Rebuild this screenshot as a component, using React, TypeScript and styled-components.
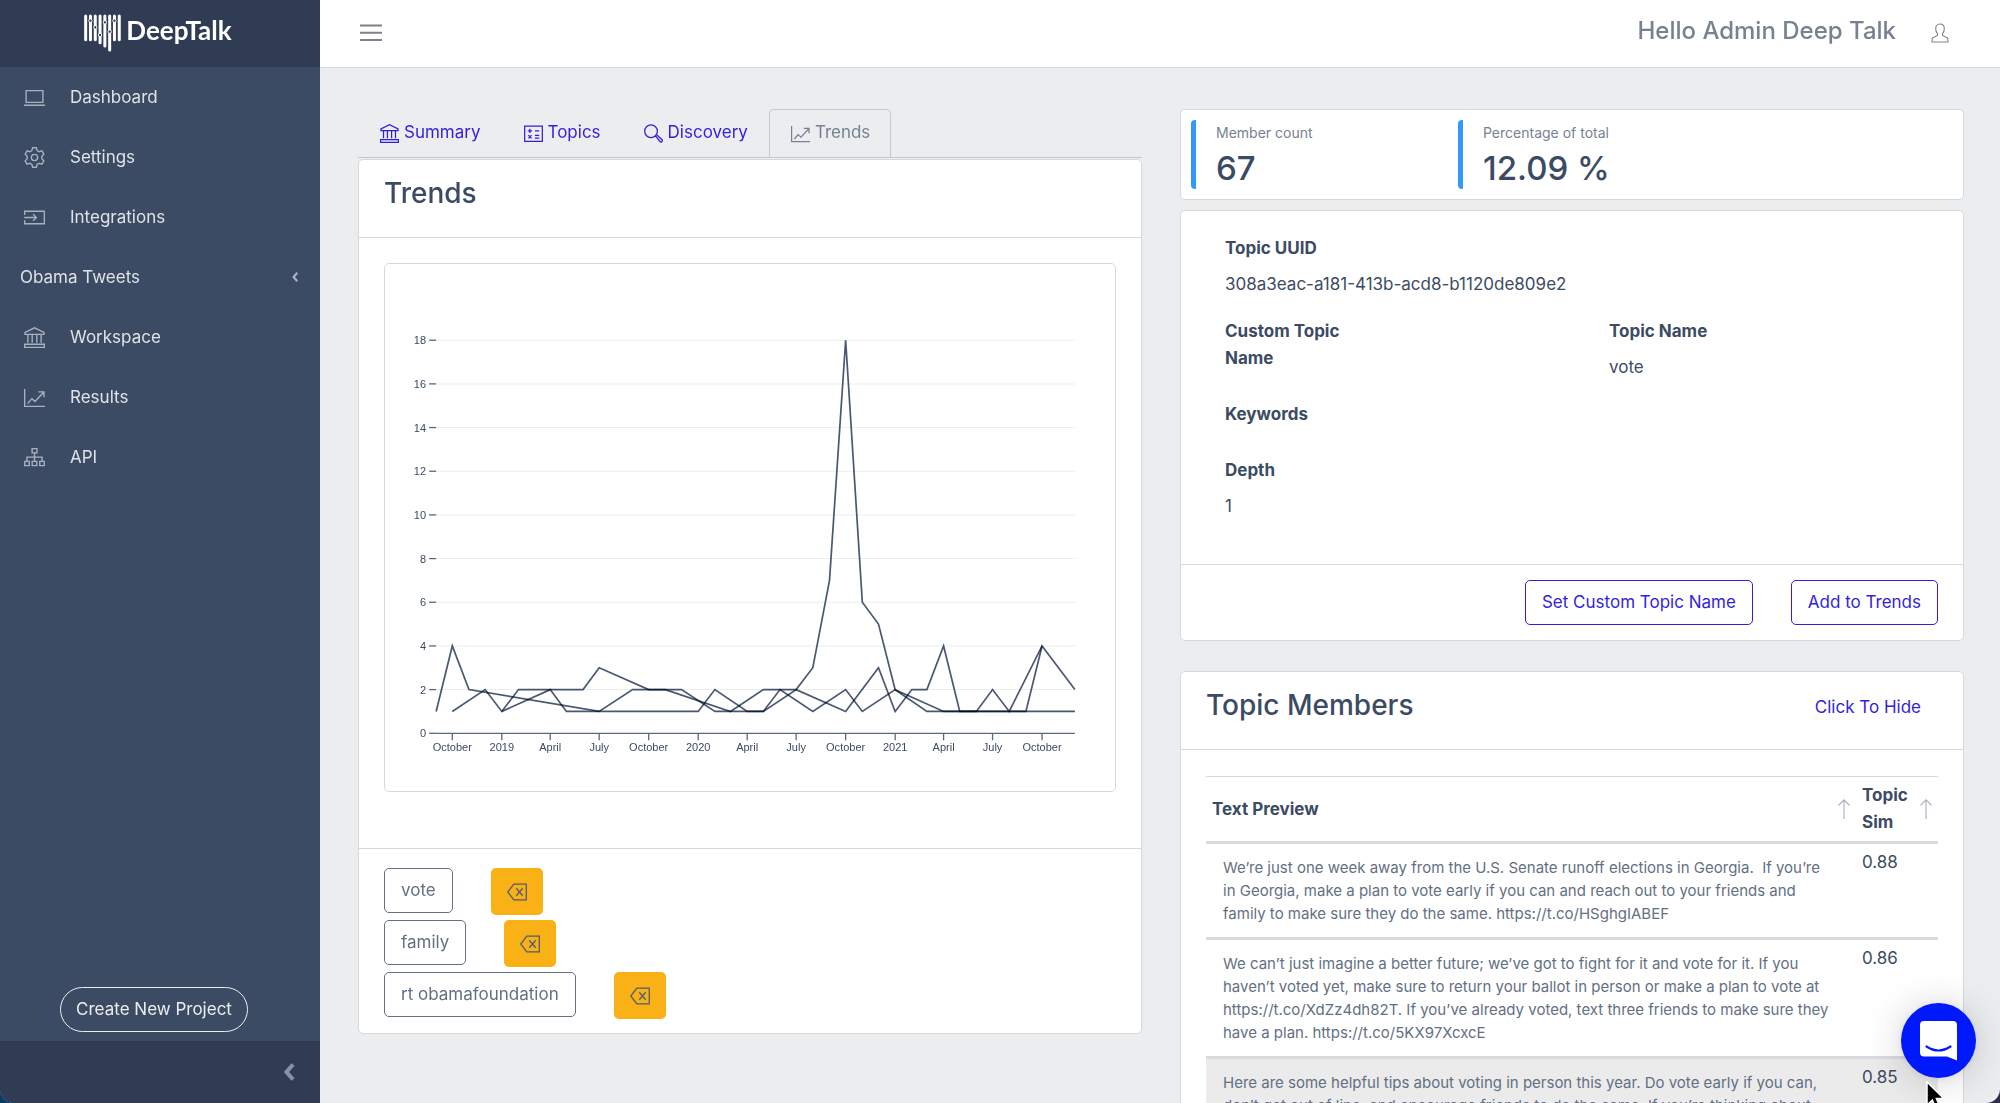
import React from "react";
import styled, { createGlobalStyle } from "styled-components";

const color = {
  text: "#3c4b64",
  muted: "#768192",
  secondary: "#636f83",
  border: "#d5d8dd",
  link: "#321fdb",
  page: "#ebedef",
  side: "#3c4b64",
  sideDark: "#303c54",
  warning: "#f9b115",
  info: "#3399ff",
};

const Global = createGlobalStyle`
  *, *::before, *::after { box-sizing: border-box; }
  body {
    margin: 0;
    background: linear-gradient(90deg, #0d3a63 0%, #2f2a4e 100%);
    color: ${color.text};
    font: 400 17px/27px Inter, "Liberation Sans", sans-serif;
  }
  a { color: ${color.link}; text-decoration: none; }
  button { font: inherit; cursor: pointer; }
  h1, h2, p, ul, dl, dd { margin: 0; padding: 0; }
  ul { list-style: none; }
`;

/* ---------- Shell ---------- */

const Shell = styled.div`
  display: flex;
  height: 100vh;
  overflow: hidden;
  border-radius: 0 0 14px 14px;
  background: ${color.page};
`;

const Sidebar = styled.aside`
  display: flex;
  flex: 0 0 320px;
  flex-direction: column;
  background: ${color.side};
  color: #dfe2e6;
`;

const Brand = styled.a`
  display: flex;
  flex: 0 0 67px;
  align-items: center;
  justify-content: center;
  gap: 5px;
  padding: 0 4px 2px 0;
  background: ${color.sideDark};
  color: #fff;
  font: 700 26px/28px Lato, sans-serif;
`;

const BrandName = styled.span`
  padding-bottom: 6px;
`;

const SideNav = styled.nav`
  flex: 1;
`;

const SideLink = styled.a`
  display: flex;
  align-items: center;
  gap: 25px;
  height: 60px;
  padding: 0 24px;
  color: #dfe2e6;
  svg { color: #a9b1be; }
`;

const SideGroup = styled.button`
  display: flex;
  align-items: center;
  justify-content: space-between;
  width: 100%;
  height: 60px;
  padding: 0 20px;
  border: 0;
  background: none;
  color: #dfe2e6;
  svg { color: #a9b1be; }
`;

const PillButton = styled.button`
  align-self: center;
  height: 45px;
  margin: 0 12px 9px 0;
  padding: 0 15px;
  border: 1px solid #ebedef;
  border-radius: 23px;
  background: none;
  color: #ebedef;
`;

const Minimizer = styled.button`
  display: flex;
  flex: 0 0 62px;
  align-items: center;
  justify-content: flex-end;
  padding: 0 24px;
  border: 0;
  background: ${color.sideDark};
  color: #8a93a2;
`;

const Main = styled.div`
  display: flex;
  flex: 1;
  flex-direction: column;
  min-width: 0;
`;

const TopBar = styled.header`
  display: flex;
  flex: 0 0 68px;
  align-items: center;
  justify-content: space-between;
  padding: 0 50px 2px 40px;
  border-bottom: 1px solid ${color.border};
  background: #fff;
`;

const IconButton = styled.button`
  display: flex;
  padding: 0;
  border: 0;
  background: none;
  color: #80808a;
`;

const Account = styled.div`
  display: flex;
  align-items: center;
  gap: 34px;
`;

const Greeting = styled.p`
  padding-bottom: 4px;
  color: ${color.muted};
  font-size: 24px;
  font-weight: 500;
  line-height: 32px;
`;

const Content = styled.main`
  display: grid;
  flex: 1;
  grid-template-columns: 1fr 1fr;
  gap: 38px;
  align-items: start;
  min-height: 0;
  padding: 41px 36px 0 38px;
`;

/* ---------- Cards ---------- */

const Card = styled.section`
  border: 1px solid ${color.border};
  border-radius: 5px;
  background: #fff;
`;

const CardHeader = styled.header`
  display: flex;
  align-items: center;
  justify-content: space-between;
  padding: 15px 42px 26px 25px;
  border-bottom: 1px solid ${color.border};
`;

const CardTitle = styled.h2`
  font-size: 28px;
  font-weight: 500;
  line-height: 36px;
`;

const HeaderLink = styled.a`
  padding-top: 4px;
`;

/* ---------- Left column ---------- */

const Tabs = styled.nav`
  display: flex;
  margin-bottom: 1px;
  border-bottom: 1px solid #c4c9d0;
`;

const Tab = styled.a<{ $active?: boolean }>`
  display: flex;
  align-items: center;
  gap: 5px;
  height: 48px;
  padding: 0 20px 0 21px;
  border: 1px solid ${(p) => (p.$active ? "#c4c9d0" : "transparent")};
  border-bottom: 0;
  border-radius: 5px 5px 0 0;
  color: ${(p) => (p.$active ? color.muted : color.link)};
  span { padding-bottom: 3px; }
`;

const ChartArea = styled.div`
  padding: 25px 25px 56px;
`;

const ChartFrame = styled.figure`
  margin: 0;
  border: 1px solid ${color.border};
  border-radius: 5px;
  svg { display: block; width: 100%; height: auto; }
`;

const TrendList = styled.ul`
  padding: 19px 25px 9px;
  border-top: 1px solid ${color.border};
`;

const TrendItem = styled.li`
  display: flex;
  align-items: flex-start;
  gap: 38px;
  height: 52px;
`;

const OutlineButton = styled.button<{ $tone: string }>`
  height: 45px;
  padding: 0 16px;
  border: 1px solid ${(p) => p.$tone};
  border-radius: 5px;
  background: none;
  color: ${(p) => p.$tone};
`;

const RemoveButton = styled.button`
  display: flex;
  align-items: center;
  height: 47px;
  padding: 0 16px;
  border: 0;
  border-radius: 5px;
  background: ${color.warning};
  color: #4f5d73;
`;

/* ---------- Right column ---------- */

const Stack = styled.div`
  display: flex;
  flex-direction: column;
`;

const Stats = styled(Card)`
  display: flex;
  gap: 38px;
  margin-bottom: 10px;
  padding: 10px;
`;

const Stat = styled.div`
  width: 229px;
  padding: 0 20px;
  border-left: 5px solid ${color.info};
  border-radius: 4px;
`;

const StatLabel = styled.p`
  padding-top: 1px;
  color: ${color.muted};
  font-size: 14px;
  line-height: 24px;
`;

const StatValue = styled.p`
  padding-top: 2px;
  font-size: 33px;
  font-weight: 500;
  line-height: 42px;
`;

const Details = styled(Card)`
  margin-bottom: 30px;
`;

const DetailGrid = styled.dl`
  display: grid;
  grid-template-columns: 1fr 1fr;
  column-gap: 74px;
  row-gap: 20px;
  padding: 24px 44px 44px;
`;

const Detail = styled.div<{ $wide?: boolean }>`
  grid-column: ${(p) => (p.$wide ? "1 / -1" : "auto")};
  dt { max-width: 150px; margin-bottom: 9px; font-weight: 700; }
`;

const DetailActions = styled.footer`
  display: flex;
  justify-content: flex-end;
  gap: 38px;
  padding: 15px 25px;
  border-top: 1px solid ${color.border};
`;

const TableArea = styled.div`
  padding: 26px 25px;
`;

const MembersTable = styled.table`
  width: 100%;
  border-collapse: separate;
  border-spacing: 0;
  border-top: 1px solid ${color.border};
  table-layout: fixed;
  th { padding: 5px 2px 5px 6px; text-align: left; vertical-align: middle; font-weight: 700; }
  th:last-child { width: 82px; }
`;

const HeadCell = styled.div`
  display: flex;
  align-items: center;
  justify-content: space-between;
  button { color: #aab1bc; }
`;

const MemberRow = styled.tr<{ $hover?: boolean }>`
  background: ${(p) => (p.$hover ? "#ebebeb" : "none")};
  td {
    padding: 5px 6px 4px;
    border-top: 3px solid #d8dbe0;
    background-clip: padding-box;
    vertical-align: top;
  }
`;

const Preview = styled.p`
  padding: 7px 16px 8px 11px;
  color: ${color.secondary};
  font-size: 15px;
  line-height: 23px;
`;

const ChatButton = styled.button`
  position: fixed;
  right: 24px;
  bottom: 25px;
  display: flex;
  align-items: center;
  justify-content: center;
  width: 75px;
  height: 75px;
  padding: 0;
  border: 0;
  border-radius: 50%;
  background: #0019fa;
  box-shadow: 0 1px 8px rgba(0, 0, 0, 0.08), 0 3px 40px rgba(0, 0, 0, 0.18);
`;

const Pointer = styled.svg`
  position: fixed;
  right: 55px;
  bottom: -9px;
`;

/* ---------- Icons, on a 20 unit grid ---------- */

const iconPaths = {
  laptop: <path d="M2 3.5h16v11.2H2zM0 17.4h20" />,
  settings: (
    <>
      <circle cx="10" cy="10" r="3" />
      <path d="M8.2.7h3.6l.7 2.7 1.9 1.1 2.7-.8 1.8 3.1-1.9 2v2.4l1.9 2-1.8 3.1-2.7-.8-1.9 1.1-.7 2.7H8.2l-.7-2.7-1.9-1.1-2.7.8-1.8-3.1 1.9-2V8.8l-1.9-2 1.8-3.1 2.7.8 1.900-1.100z" />
    </>
  ),
  input: <path d="M.6 7.5V4h18.800v12H.6v-3.500M.2 10h11.600M8.600 6.800l3.200 3.200-3.200 3.200" />,
  bank: (
    <path d="M1 7V5.200L10 .8l9 4.400V7zM3.700 7.500v7.500M7.800 7.500v7.500M12.200 7.500v7.500M16.300 7.500v7.500M.6 16.400h18.800v3H.6z" />
  ),
  chart: <path d="M.6 2v16.500H20M3.500 15.800l4-4.700 3 2.700L18.700 5M13.500 4.700h5.500v5" />,
  sitemap: (
    <path d="M7.700 1.600h4.600v4H7.700zM.7 13.700h4.300v4H.7zM7.800 13.700h4.400v4H7.800zM15 13.700h4.300v4H15zM10 5.600v8.100M2.800 13.700V9.600h14.400v4.100" />
  ),
  topics: (
    <>
      <path d="M.7 2.200h18.600v16H.7z" />
      <path d="M4 7.200h4.500M6.200 5v4.500M11.500 7.200h4.500M4.600 11.700l3.400 3.400M8 11.700l-3.400 3.400M11.500 12h4.500M11.500 14.900h4.500" />
    </>
  ),
  search: (
    <path d="M14.100 7.600a6.700 6.700 0 1 1-13.400 0 6.700 6.700 0 0 1 13.400 0zM12.100 12.400l4.700 6q1 1 2 .2 1-1 .2-2.100l-5.400-4.900" />
  ),
  backspace: <path d="M6.800 2.200h12.500v15.600H6.800L.8 10zM9.300 6.300l6.400 7.400M15.700 6.300l-6.400 7.400" />,
  user: (
    <path d="M10 1c2.700 0 4.300 2 4.300 4.700 0 2-.7 3.800-1.800 5v1.800l4.500 2.300c.6.400.9.900.9 1.500V19H2.100v-2.700c0-.6.300-1.100.9-1.500l4.500-2.300v-1.800c-1.100-1.200-1.800-3-1.800-5C5.700 3 7.300 1 10 1z" />
  ),
  up: <path d="M10 20V.8M4.500 6.500L10 .8l5.500 5.700" />,
};

type IconName = keyof typeof iconPaths;

const Icon = ({ name, size = 20, stroke = 1.3 }: { name: IconName; size?: number; stroke?: number }) => (
  <svg width={size} height={size} viewBox="0 0 20 20" fill="none" stroke="currentColor" strokeWidth={stroke} aria-hidden="true">
    {iconPaths[name]}
  </svg>
);

const Chevron = ({ width, height, stroke }: { width: number; height: number; stroke: number }) => (
  <svg width={width} height={height} viewBox="0 0 12 18" fill="none" stroke="currentColor" strokeWidth={stroke} aria-hidden="true">
    <path d="M10 1.500L3.500 9l6.500 7.500" />
  </svg>
);

const logoBars = [
  { end: 103 },
  { end: 103, dot: 42 },
  { end: 103, dot: 62 },
  { end: 112, dot: 85 },
  { end: 122, dot: 47 },
  { end: 134, dot: 75 },
  { end: 103, dot: 42 },
  { end: 103 },
];

const Logo = () => (
  <svg width="37" height="38" viewBox="0 0 111 114" aria-hidden="true">
    {logoBars.map((bar, i) => {
      const x = 5 + i * 14.4;
      return (
        <g key={i}>
          <path d={`M${x} 6V${bar.end - 26}`} stroke="#fff" strokeWidth="9" strokeLinecap="round" />
          {bar.dot && <circle cx={x} cy={bar.dot - 22} r="5" fill={color.sideDark} stroke="#fff" strokeWidth="3" />}
        </g>
      );
    })}
  </svg>
);

/* ---------- Chart ---------- */

const DAY = 86400000;
const START = Date.UTC(2018, 8, 1);
const END = Date.UTC(2021, 11, 1);
const LEFT = 51;
const RIGHT = 688;
const TOP = 76;
const BOTTOM = 468;

/** Horizontal position of the first day of a month, counted from September 2018. */
const monthX = (month: number) => {
  const days = (Date.UTC(2018, 8 + month, 1) - START) / DAY;
  return LEFT + (days * (RIGHT - LEFT)) / ((END - START) / DAY);
};
const valueY = (value: number) => BOTTOM - (value * (BOTTOM - TOP)) / 18;

const series: [number, number][][] = [
  [[0, 1], [1, 4], [2, 2], [10, 1], [12, 2], [13, 2], [15, 2], [17, 1], [20, 1], [22, 2], [23, 3], [24, 7], [25, 18], [26, 6], [27, 5], [28, 2], [30, 1], [36, 1], [37, 4], [39, 2]],
  [[1, 1], [3, 2], [4, 1], [5, 2], [9, 2], [10, 3], [13, 2], [14, 2], [18, 1], [20, 2], [22, 2], [25, 1], [27, 3], [28, 1], [29, 2], [30, 2], [31, 4], [32, 1], [33, 1], [34, 2], [35, 1], [37, 4]],
  [[4, 1], [7, 2], [8, 1], [16, 1], [17, 2], [19, 1], [20, 1], [21, 2], [23, 1], [25, 2], [26, 1], [28, 2], [31, 1], [39, 1]],
];

const xTicks: [number, string][] = [
  [1, "October"], [4, "2019"], [7, "April"], [10, "July"], [13, "October"], [16, "2020"], [19, "April"],
  [22, "July"], [25, "October"], [28, "2021"], [31, "April"], [34, "July"], [37, "October"],
];
const yTicks = [0, 2, 4, 6, 8, 10, 12, 14, 16, 18];

const ChartText = styled.text`
  fill: ${color.text};
  font: 11px "Liberation Sans", sans-serif;
`;

const SeriesLine = styled.polyline`
  fill: none;
  stroke: #4a5972;
  stroke-width: 1.7px;
  mix-blend-mode: multiply;
`;

const TrendsChart = () => (
  <svg viewBox="0 0 728 526" role="img" aria-label="Topic trends by month">
    {yTicks.map((v) => (
      <g key={v}>
        {v > 0 && <path d={`M${LEFT} ${valueY(v)}H${RIGHT}`} stroke="#ededf0" />}
        <path d={`M${LEFT - 7} ${valueY(v)}H${LEFT}`} stroke="#5b6880" strokeWidth="1.3" />
        <ChartText x={LEFT - 10} y={valueY(v) + 4} textAnchor="end">{v}</ChartText>
      </g>
    ))}
    <path d={`M${LEFT} ${BOTTOM}H${RIGHT}`} stroke="#5b6880" strokeWidth="1.3" />
    {xTicks.map(([month, label]) => (
      <g key={month}>
        <path d={`M${monthX(month)} ${BOTTOM}v7`} stroke="#5b6880" strokeWidth="1.3" />
        <ChartText x={monthX(month)} y={BOTTOM + 18} textAnchor="middle">{label}</ChartText>
      </g>
    ))}
    {series.map((points, i) => (
      <SeriesLine key={i} points={points.map(([m, v]) => `${monthX(m)},${valueY(v)}`).join(" ")} />
    ))}
  </svg>
);

/* ---------- Data ---------- */

const toolLinks: [IconName, string][] = [["laptop", "Dashboard"], ["settings", "Settings"], ["input", "Integrations"]];
const projectLinks: [IconName, string][] = [["bank", "Workspace"], ["chart", "Results"], ["sitemap", "API"]];
const tabs: [IconName, string][] = [["bank", "Summary"], ["topics", "Topics"], ["search", "Discovery"], ["chart", "Trends"]];
const trends = ["vote", "family", "rt obamafoundation"];

const members = [
  {
    text: "We’re just one week away from the U.S. Senate runoff elections in Georgia. \u00a0If you’re in Georgia, make a plan to vote early if you can and reach out to your friends and family to make sure they do the same. https://t.co/HSghgIABEF",
    sim: "0.88",
  },
  {
    text: "We can’t just imagine a better future; we’ve got to fight for it and vote for it. If you haven’t voted yet, make sure to return your ballot in person or make a plan to vote at https://t.co/XdZz4dh82T. If you’ve already voted, text three friends to make sure they have a plan. https://t.co/5KX97XcxcE",
    sim: "0.86",
  },
  {
    text: "Here are some helpful tips about voting in person this year. Do vote early if you can, don’t get out of line, and encourage friends to do the same. If you’re thinking about",
    sim: "0.85",
  },
];

export default function App() {
  return (
    <>
      <Global />
      <Shell>
        <Sidebar>
          <Brand href="#">
            <Logo />
            <BrandName>DeepTalk</BrandName>
          </Brand>
          <SideNav>
            {toolLinks.map(([icon, label]) => (
              <SideLink key={label} href="#"><Icon name={icon} size={21} />{label}</SideLink>
            ))}
            <SideGroup>
              Obama Tweets
              <Chevron width={10} height={10} stroke={4} />
            </SideGroup>
            {projectLinks.map(([icon, label]) => (
              <SideLink key={label} href="#"><Icon name={icon} size={21} />{label}</SideLink>
            ))}
          </SideNav>
          <PillButton>Create New Project</PillButton>
          <Minimizer aria-label="Collapse sidebar">
            <Chevron width={14} height={18} stroke={4} />
          </Minimizer>
        </Sidebar>

        <Main>
          <TopBar>
            <IconButton aria-label="Toggle menu">
              <svg width="22" height="18" viewBox="0 0 22 18" stroke="currentColor" strokeWidth="1.9" aria-hidden="true">
                <path d="M0 1.500h22M0 8.800h22M0 16h22" />
              </svg>
            </IconButton>
            <Account>
              <Greeting>Hello Admin Deep Talk</Greeting>
              <IconButton aria-label="Account"><Icon name="user" stroke={1.1} /></IconButton>
            </Account>
          </TopBar>

          <Content>
            <div>
              <Tabs>
                {tabs.map(([icon, label]) => (
                  <Tab key={label} href="#" $active={label === "Trends"}>
                    <Icon name={icon} size={19} /><span>{label}</span>
                  </Tab>
                ))}
              </Tabs>
              <Card>
                <CardHeader><CardTitle>Trends</CardTitle></CardHeader>
                <ChartArea>
                  <ChartFrame><TrendsChart /></ChartFrame>
                </ChartArea>
                <TrendList>
                  {trends.map((name) => (
                    <TrendItem key={name}>
                      <OutlineButton $tone={color.secondary}>{name}</OutlineButton>
                      <RemoveButton aria-label={`Remove ${name}`}><Icon name="backspace" size={20} /></RemoveButton>
                    </TrendItem>
                  ))}
                </TrendList>
              </Card>
            </div>

            <Stack>
              <Stats>
                <Stat><StatLabel>Member count</StatLabel><StatValue>67</StatValue></Stat>
                <Stat><StatLabel>Percentage of total</StatLabel><StatValue>12.09 %</StatValue></Stat>
              </Stats>

              <Details>
                <DetailGrid>
                  <Detail $wide><dt>Topic UUID</dt><dd>308a3eac-a181-413b-acd8-b1120de809e2</dd></Detail>
                  <Detail><dt>Custom Topic Name</dt><dd /></Detail>
                  <Detail><dt>Topic Name</dt><dd>vote</dd></Detail>
                  <Detail $wide><dt>Keywords</dt><dd /></Detail>
                  <Detail $wide><dt>Depth</dt><dd>1</dd></Detail>
                </DetailGrid>
                <DetailActions>
                  <OutlineButton $tone={color.link}>Set Custom Topic Name</OutlineButton>
                  <OutlineButton $tone={color.link}>Add to Trends</OutlineButton>
                </DetailActions>
              </Details>

              <Card>
                <CardHeader>
                  <CardTitle>Topic Members</CardTitle>
                  <HeaderLink href="#">Click To Hide</HeaderLink>
                </CardHeader>
                <TableArea>
                  <MembersTable>
                    <thead>
                      <tr>
                        <th>
                          <HeadCell>Text Preview<IconButton aria-label="Sort by text"><Icon name="up" stroke={1.1} /></IconButton></HeadCell>
                        </th>
                        <th>
                          <HeadCell>Topic Sim<IconButton aria-label="Sort by similarity"><Icon name="up" stroke={1.1} /></IconButton></HeadCell>
                        </th>
                      </tr>
                    </thead>
                    <tbody>
                      {members.map((m) => (
                        <MemberRow key={m.sim} $hover={m.sim === "0.85"}>
                          <td><Preview>{m.text}</Preview></td>
                          <td>{m.sim}</td>
                        </MemberRow>
                      ))}
                    </tbody>
                  </MembersTable>
                </TableArea>
              </Card>
            </Stack>
          </Content>
        </Main>
      </Shell>

      <ChatButton aria-label="Open chat">
        <svg width="37" height="40" viewBox="0 0 37 40" aria-hidden="true">
          <path d="M4 0h29q4 0 4 4v35.500l-10-4H4q-4 0-4-4V4q0-4 4-4z" fill="#fff" />
          <path d="M6.500 25.500q12 8 24 0" fill="none" stroke="#0019fa" strokeWidth="2.2" strokeLinecap="round" />
        </svg>
      </ChatButton>
      <Pointer width="19" height="31" viewBox="0 0 19 31" aria-hidden="true">
        <path d="M1 1v23l5.400-5 3.600 8.800 4-1.700-3.600-8.600h7.300z" fill="#000" stroke="#fff" strokeWidth="1.5" />
      </Pointer>
    </>
  );
}
